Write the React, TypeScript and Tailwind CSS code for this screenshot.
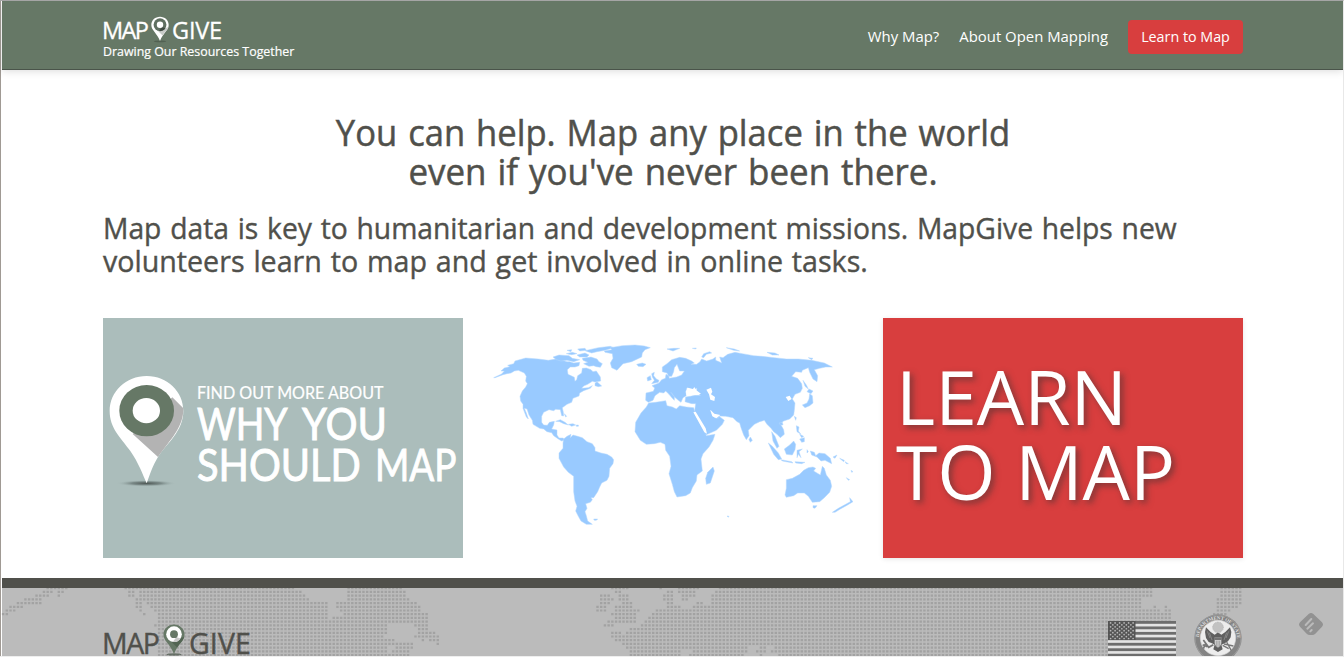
import React from "react";

type Run = [number, number];

const DOT_PITCH = 3.715;

// Land runs of the dotted footer map, one entry per dot row.
const dotRows: Run[][] = [
  [[47, 67], [125, 293], [348, 403], [612, 628], [660, 663], [677, 698], [717, 1154], [1219, 1243]],
  [[42, 52], [57, 65], [128, 133], [137, 302], [348, 405], [613, 623], [667, 672], [677, 695], [715, 1151], [1219, 1243]],
  [[35, 48], [57, 61], [128, 134], [139, 305], [348, 405], [599, 609], [618, 628], [662, 672], [681, 695], [711, 1151], [1219, 1243]],
  [[25, 42], [136, 142], [143, 308], [345, 409], [599, 613], [618, 628], [662, 672], [681, 687], [711, 1143], [1216, 1241]],
  [[17, 42], [136, 142], [147, 327], [337, 417], [599, 609], [622, 632], [667, 672], [696, 702], [711, 1141], [1216, 1241]],
  [[10, 22], [136, 142], [150, 327], [337, 420], [596, 608], [614, 632], [667, 680], [692, 1143], [1151, 1155], [1163, 1167], [1216, 1237]],
  [[6, 15], [139, 143], [154, 327], [340, 420], [596, 606], [614, 639], [655, 1160], [1163, 1170], [1216, 1232]],
  [[2, 8], [143, 147], [157, 327], [343, 427], [612, 635], [652, 1170], [1213, 1226]],
  [[158, 328], [331, 427], [614, 635], [647, 1170]],
  [[158, 334], [336, 427], [607, 635], [643, 1170]],
  [[155, 389], [413, 427], [603, 613], [640, 1170]],
  [[158, 387], [417, 430], [629, 1170]],
  [[158, 387], [417, 437], [612, 620], [625, 1170]],
  [[158, 385], [413, 438], [612, 1170]],
  [[158, 395], [420, 424], [428, 438], [614, 1170]],
  [[158, 413], [434, 438], [621, 765], [768, 1170]],
  [[158, 389], [395, 412], [625, 746], [759, 765], [773, 1170]],
  [[158, 389], [392, 408], [629, 680], [692, 746], [755, 765], [771, 1170]],
  [[158, 409], [629, 680], [688, 743], [759, 763], [778, 1170]],
];

function DottedMap() {
  const paths = dotRows.map((runs, row) => {
    const y = row * DOT_PITCH - 0.9;
    let d = "";
    for (let col = 0; col < 340; col++) {
      const x = 1.9 + col * DOT_PITCH;
      if (runs.some(([a, b]) => x + 1 >= a && x + 1 <= b)) {
        d += `M${x.toFixed(2)} ${y.toFixed(2)}h2.4v2.2h-2.4z`;
      }
    }
    return d;
  });
  return (
    <svg className="absolute top-0 -left-[2px]" width="1344" height="69" viewBox="0 0 1344 69">
      <path d={paths.join("")} fill="#a2a2a2" />
    </svg>
  );
}

const landShapes: string[] = [
  // North and Central America
  "M26 128L50 117L58 108L48 108L58 99L74 95L68 91L86 86L90 78L122 69L160 72L190 76L212 72L232 76L246 80L254 80L266 84L284 82L282 92L270 96L256 96L247 104L249 118L262 124L268 127L270 139L275 134L278 122L290 114L292 100L304 99L318 104L324 110L334 108L346 126L347 138L330 141L322 139L308 148L296 153L290 160L310 158L322 152L316 160L296 167L284 174L282 183L264 190L260 202L246 208L232 218L235 232L236 243L230 242L226 224L212 223L206 227L192 224L176 232L170 244L170 262L176 270L187 271L193 262L208 259L206 270L200 282L216 285L216 300L222 309L234 309L240 314L230 318L220 312L206 302L200 293L186 290L176 282L164 280L144 268L142 256L132 240L126 222L118 220L124 234L130 252L124 246L114 220L114 208L107 198L105 184L112 168L122 156L127 146L122 138L124 124L118 114L100 106L88 108L78 114L66 116L54 119L30 128Z",
  // Arctic archipelago
  "M204 66L222 60L252 62L262 70L284 74L266 80L246 76L228 78L214 74Z",
  "M244 56L262 52L276 56L260 59ZM246 46L260 44L258 50ZM278 42L300 40L304 46L284 48Z",
  "M276 60L300 54L312 60L306 66L284 66ZM300 47L340 38L376 34L386 38L360 46L336 50L320 54Z",
  "M292 70L318 66L336 72L342 80L352 86L346 97L334 95L326 92L312 94L296 86L308 82L294 76Z",
  "M330 145L336 140L350 153L340 155L330 152Z",
  // Greenland and Iceland
  "M358 48L380 44L376 38L412 32L450 30L478 33L496 38L480 44L472 54L470 66L440 80L414 86L396 106L380 98L376 84L384 70L382 56L360 52Z",
  "M455 88L472 84L483 88L474 95L460 94Z",
  // Caribbean
  "M212 259L226 254L240 262L250 270L236 266L224 260ZM250 268L264 266L272 270L260 274ZM238 236L245 244L242 246ZM274 270L280 270L280 274L274 274Z",
  // South America
  "M236 312L246 304L258 298L256 308L264 300L278 304L292 308L306 320L322 326L330 338L330 348L348 354L366 358L380 366L386 374L384 386L374 400L372 424L366 436L350 444L344 456L338 470L326 488L318 488L322 494L316 502L302 506L306 520L300 530L304 542L308 558L322 568L304 568L288 558L280 544L272 528L276 514L270 498L266 470L266 424L250 412L236 396L222 370L222 354L234 340L234 324Z",
  "M326 552L338 552L334 556L328 556ZM726 543L732 544L730 547Z",
  // Europe and Asia
  "M482 196L483 174L505 169L509 159L501 152L522 144L530 134L541 130L543 118L551 122L553 130L575 126L590 120L598 108L584 108L580 98L576 88L568 98L566 110L560 124L551 124L546 114L532 110L532 96L546 86L560 74L584 67L602 70L620 78L628 84L618 88L635 88L645 80L650 72L665 78L684 72L692 66L692 76L706 82L710 84L704 66L714 68L728 58L750 52L772 56L806 62L830 64L868 68L904 72L940 72L980 76L1018 84L1042 96L1022 96L1004 100L988 104L998 122L996 140L984 132L974 112L970 98L952 106L950 112L932 110L920 124L938 130L950 146L952 160L946 172L930 178L922 192L930 204L928 226L926 240L914 252L896 258L886 266L896 284L898 298L886 308L876 298L866 290L858 280L846 268L838 256L824 260L808 268L790 286L792 302L784 314L776 300L768 278L764 264L756 260L744 248L722 244L704 243L700 250L690 248L676 226L682 240L690 249L704 245L718 256L712 268L694 286L662 300L650 280L636 256L628 234L632 206L620 206L600 200L602 186L616 184L630 181L646 181L640 174L634 170L636 160L622 164L606 158L602 170L604 182L594 188L588 202L580 196L566 184L558 172L568 184L568 196L562 190L552 178L542 168L536 174L524 172L510 182L504 196L490 202Z",
  // British Isles
  "M500 116L508 112L506 122L514 132L522 136L520 142L500 146L508 136L502 126ZM486 128L496 122L499 134L488 138Z",
  // Africa
  "M491 204L512 202L542 197L546 212L562 216L574 222L584 212L604 216L626 218L632 240L644 264L660 290L664 302L690 298L684 316L672 336L654 356L648 372L652 408L636 420L634 438L622 458L616 474L602 482L576 486L568 470L562 448L552 416L558 394L554 364L542 346L540 328L526 322L508 326L484 328L466 316L450 290L452 262L468 234L484 216Z",
  "M684 396L688 408L676 444L664 448L662 430L668 412Z",
  // Arctic islands of Eurasia
  "M546 42L566 40L584 40L564 48ZM622 40L634 39L632 42ZM650 66L656 56L674 50L680 54L664 58L656 68ZM724 38L748 42L764 48L746 46ZM846 52L870 54L882 60L862 60ZM970 68L984 70L980 74Z",
  // South-east Asia and Japan
  "M860 290L870 304L882 334L876 340L864 318ZM850 324L862 334L880 354L890 372L880 374L866 358ZM888 374L920 380L924 384L892 378ZM930 380L960 382L950 386L932 384Z",
  "M898 342L914 330L926 318L932 328L930 344L922 360L904 358ZM936 346L952 342L942 350L948 368L940 358L936 368ZM934 272L942 276L940 288L948 298L936 290ZM944 312L958 308L958 320L950 322ZM944 298L956 304L950 308ZM966 344L970 350L966 354Z",
  "M976 348L988 352L992 362L1002 354L1020 356L1036 370L1040 386L1020 376L1008 378L996 366L980 360Z",
  "M952 210L966 204L972 192L974 176L982 182L984 204L974 212L960 218ZM966 170L972 162L984 168L978 176ZM954 136L964 150L970 162L960 154ZM928 244L934 248L932 256ZM882 264L892 262L894 270L886 270ZM796 306L802 316L796 322L792 314Z",
  "M1044 366L1056 360L1050 370ZM1064 370L1078 376L1076 380ZM1080 380L1090 386L1084 386ZM1084 428L1094 434L1090 436ZM1098 406L1104 410L1100 412Z",
  // Australia and New Zealand
  "M904 434L922 430L944 418L956 406L970 398L984 396L992 400L986 408L1006 420L1012 394L1018 400L1024 420L1036 436L1040 454L1034 472L1018 488L1004 500L982 502L970 484L958 474L938 474L926 482L904 487L900 480L904 460ZM984 512L996 512L990 520L984 518Z",
  "M1094 488L1104 500L1084 512L1066 522L1050 532L1042 532L1060 520L1082 508L1096 500Z",
];

const seaShapes: string[] = [
  "M604 170L608 158L624 162L628 156L632 164L648 176L632 180L616 178L604 182Z",
  "M664 164L678 158L682 170L678 178L690 186L688 198L676 194L672 178Z",
  "M676 224L688 236L706 240L694 250L682 244ZM625 232L632 230L662 280L666 296L658 292L644 266Z",
  "M902 186L914 182L920 192L910 198Z",
];

function WorldMap() {
  return (
    <svg className="block h-[240px] w-[360px]" viewBox="24 -51 1080 720">
      <g fill="#99caff" stroke="#b5d9ff" strokeWidth="1.5" strokeLinejoin="round">
        {landShapes.map((d, i) => (
          <path key={i} d={d} />
        ))}
      </g>
      <path d={seaShapes.join("")} fill="#fff" />
    </svg>
  );
}

function BigPin() {
  return (
    <svg className="absolute top-[56px] left-[5px] h-[114px] w-[78px]" viewBox="38 189 234 342">
      <defs>
        <radialGradient id="ground">
          <stop offset="0" stopColor="#4d5653" />
          <stop offset="0.5" stopColor="#738280" stopOpacity="0.85" />
          <stop offset="1" stopColor="#abbdbb" stopOpacity="0" />
        </radialGradient>
      </defs>
      <ellipse cx="153" cy="517" rx="90" ry="10" fill="url(#ground)" />
      <path d="M154 195C92 195 43 242 43 300C43 352 76 380 105 420C130 456 142 490 154 517C164 490 171 466 188 438C213 398 264 362 264 300C264 242 216 195 154 195Z" fill="#fff" />
      <path d="M231 259L264 292C265 350 224 386 188 438L112 369Z" fill="#b3b3b3" />
      <ellipse cx="154" cy="299" rx="82" ry="77" fill="#667866" />
      <ellipse cx="153" cy="299" rx="41" ry="38" fill="#fff" />
    </svg>
  );
}

function SmallPin({ dark, className }: { dark?: boolean; className: string }) {
  const body = dark ? "#667866" : "#fff";
  const ring = dark ? "#fff" : "#5f6f60";
  return (
    <svg className={className} viewBox="0 0 56 82">
      <ellipse cx="28" cy="78" rx="19" ry="3" fill="#4a574a" opacity="0.7" />
      <path d="M28 1C13 1 1 12 1 27C1 44 19 52 28 77C37 52 55 44 55 27C55 12 43 1 28 1Z" fill={body} />
      <path d="M46 36L54 33C50 46 41 50 36 60L20 44Z" fill={dark ? "#536553" : "#c8cbc8"} />
      <circle cx="28" cy="26" r="20" fill={ring} />
      <path d="M34 33L45 37A20 20 0 0 1 25 46Z" fill={dark ? "#c9c9c9" : "#3f4a41"} />
      <circle cx="28" cy="26" r="10" fill={dark ? "#667866" : "#fff"} />
    </svg>
  );
}

const stripes = [0, 1, 2, 3, 4, 5, 6];

function Flag() {
  return (
    <svg className="h-[36px] w-[68px] shrink-0" viewBox="0 0 68 36">
      <rect width="68" height="36" fill="#e4e4e4" />
      {stripes.map((n) => (
        <rect key={n} y={n * 5.46} width="68" height="2.8" fill="#6d6d6d" />
      ))}
      <rect width="27.5" height="19" fill="#555" />
      {Array.from({ length: 9 }).map((_, r) =>
        Array.from({ length: r % 2 ? 5 : 6 }).map((__, c) => (
          <circle key={`${r}-${c}`} cx={2.6 + c * 4.5 + (r % 2 ? 2.25 : 0)} cy={1.9 + r * 1.95} r="0.85" fill="#b8b8b8" />
        )),
      )}
    </svg>
  );
}

function Seal() {
  return (
    <svg className="h-[48px] w-[48px] shrink-0" viewBox="0 0 144 144">
      <defs>
        <path id="rim" d="M16 84A57 57 0 1 1 128 84" />
      </defs>
      <circle cx="72" cy="72" r="71" fill="#848484" />
      <circle cx="72" cy="72" r="69" fill="none" stroke="#a4a4a4" strokeWidth="2" />
      <text fontFamily="Liberation Serif, serif" fontSize="15" fontWeight="bold" fill="#dedede">
        <textPath href="#rim" startOffset="14" textLength="176">DEPARTMENT OF STATE</textPath>
      </text>
      <circle cx="72" cy="72" r="53" fill="#ededed" stroke="#d4d4d4" strokeWidth="2" />
      <circle cx="72" cy="40" r="16" fill="#c2c2c2" stroke="#aaa" strokeWidth="2" strokeDasharray="3 2" />
      <path d="M62 62L50 54L36 40L33 54L36 72L44 84L54 88L62 92L58 106L72 114L86 106L82 92L92 88L102 82L110 70L112 54L108 40L94 54L82 62L76 58L70 56Z" fill="#606060" />
      <path d="M40 52L48 72M46 56L54 78M104 52L96 72M98 56L90 78" stroke="#999" strokeWidth="2" />
      <path d="M61 70H83V86C83 94 77 98 72 102C67 98 61 94 61 86Z" fill="#d5d5d5" stroke="#666" strokeWidth="2" />
      <path d="M61 71H83V78H61Z" fill="#747474" />
      <path d="M67 80V97M72 80V101M77 80V97" stroke="#8a8a8a" strokeWidth="2" />
      <path d="M58 92L44 100L28 78M40 98L26 92M34 90L28 104" fill="none" stroke="#777" strokeWidth="5" />
      <path d="M86 94L104 104M90 90L118 96M98 84L112 110" stroke="#777" strokeWidth="4" />
    </svg>
  );
}

function FeedBadge() {
  return (
    <svg className="h-[22px] w-[24px] shrink-0" viewBox="0 0 72 66">
      <path d="M29 3Q36 -3 43 3L69 28Q75 35 69 41L49 62Q45 66 40 66H32Q27 66 23 62L3 41Q-3 35 3 28Z" fill="#929292" />
      <path d="M20 36L37 18M25 47L42 31M34 55L38 51" stroke="#bbb" strokeWidth="6" strokeLinecap="round" />
    </svg>
  );
}

export default function App() {
  return (
    <div className="flex h-[657px] w-[1344px] flex-col overflow-hidden border-t border-r border-b border-t-[#a5a5a5] border-r-[#e8e8e8] border-b-[#eee] bg-white font-['Open_Sans','Noto_Sans',sans-serif] text-[#50504b]">
      <div className="flex min-h-0 flex-1 border-l border-[#a09a94]">
        <div className="flex min-w-0 flex-1 flex-col border-l border-white">
          <header className="relative flex h-[69px] shrink-0 justify-between border-b border-[#4a544a] bg-[#667866] pr-[100px] pl-[101px] text-white shadow-[0_1px_8px_rgba(0,0,0,0.15)]">
            <div className="pt-[14px]">
              <div className="flex h-[28px] items-start whitespace-nowrap [-webkit-text-stroke:0.3px]">
                <span className="-ml-[1px] w-[49px] text-[23.5px] leading-[31px] tracking-[-1.6px]">MAP</span>
                <SmallPin className="mt-[1px] h-[27px] w-[18px] shrink-0" />
                <span className="ml-[3px] text-[23.5px] leading-[31px] tracking-[-0.2px]">GIVE</span>
              </div>
              <div className="origin-left scale-x-[0.953] text-[13px] leading-[16px] whitespace-nowrap [-webkit-text-stroke:0.2px]">
                Drawing Our Resources Together
              </div>
            </div>
            <nav className="flex h-[71px] items-center text-[14.9px] whitespace-nowrap">
              <a>Why Map?</a>
              <a className="ml-[20px]">About Open Mapping</a>
              <a className="ml-[20px] flex h-[34px] w-[115px] items-center justify-center rounded-[4px] bg-[#d83e3e] text-[14.3px]">
                Learn to Map
              </a>
            </nav>
          </header>

          <main className="h-[508px] shrink-0 pt-[43px] pr-[100px] pl-[101px]">
            <h1 className="text-center text-[36px] leading-[39px] whitespace-nowrap [-webkit-text-stroke:0.5px] [word-spacing:2px]">
              <span className="block scale-x-[0.961]">You can help. Map any place in the world</span>
              <span className="block scale-x-[0.97]">even if you've never been there.</span>
            </h1>
            <p className="mt-[20px] text-[30px] leading-[33px] whitespace-nowrap [-webkit-text-stroke:0.4px] [word-spacing:1.5px]">
              <span className="block origin-left scale-x-[0.942]">
                Map data is key to humanitarian and development missions. MapGive helps new
              </span>
              <span className="block origin-left scale-x-[0.954]">
                volunteers learn to map and get involved in online tasks.
              </span>
            </p>
            <div className="mt-[41px] flex h-[240px] gap-[30px]">
              <a className="relative block w-[360px] bg-[#abbdbb] pt-[65px] pl-[94px] font-[Lato,sans-serif] whitespace-nowrap text-white">
                <BigPin />
                <div className="w-max origin-left scale-x-[0.92] text-[17.5px] leading-[20px] [-webkit-text-stroke:0.2px]">
                  FIND OUT MORE ABOUT
                </div>
                <div className="flex text-[43.5px] leading-[41px] [-webkit-text-stroke:0.9px]">
                  <span className="w-[105px] origin-left scale-x-[0.86]">WHY</span>
                  <span className="w-max origin-left scale-x-[0.92]">YOU</span>
                </div>
                <div className="flex text-[43.5px] leading-[41px] [-webkit-text-stroke:0.9px]">
                  <span className="w-[178px] origin-left scale-x-[0.915]">SHOULD</span>
                  <span className="w-max origin-left scale-x-[0.85]">MAP</span>
                </div>
              </a>
              <a className="block w-[360px]">
                <WorldMap />
              </a>
              <a className="block w-[360px] bg-[#d83e3e] pt-[41px] pl-[13px] text-[75px] leading-[75px] whitespace-nowrap text-white shadow-[0_1px_5px_rgba(0,0,0,0.1)] [text-shadow:3px_3px_6px_rgba(50,50,50,0.55)]">
                <div>LEARN</div>
                <div>TO MAP</div>
              </a>
            </div>
          </main>

          <footer className="relative h-[78px] shrink-0 border-t-[10px] border-[#50504b] bg-[#bbb]">
            <DottedMap />
            <div className="relative flex items-start pl-[100px] whitespace-nowrap">
              <span className="mt-[43px] w-[61px] text-[28.5px] leading-[24px] tracking-[-1.5px] [-webkit-text-stroke:0.4px]">MAP</span>
              <SmallPin dark className="mt-[36px] h-[32px] w-[22px] shrink-0" />
              <span className="mt-[43px] ml-[4px] text-[28.5px] leading-[24px] tracking-[0.1px] [-webkit-text-stroke:0.4px]">GIVE</span>
              <div className="mr-[20px] ml-auto flex items-start">
                <div className="mt-[33px] flex">
                  <Flag />
                </div>
                <div className="mt-[26px] ml-[18px] flex">
                  <Seal />
                </div>
                <div className="mt-[25px] ml-[57px] flex">
                  <FeedBadge />
                </div>
              </div>
            </div>
          </footer>
        </div>
      </div>
    </div>
  );
}
